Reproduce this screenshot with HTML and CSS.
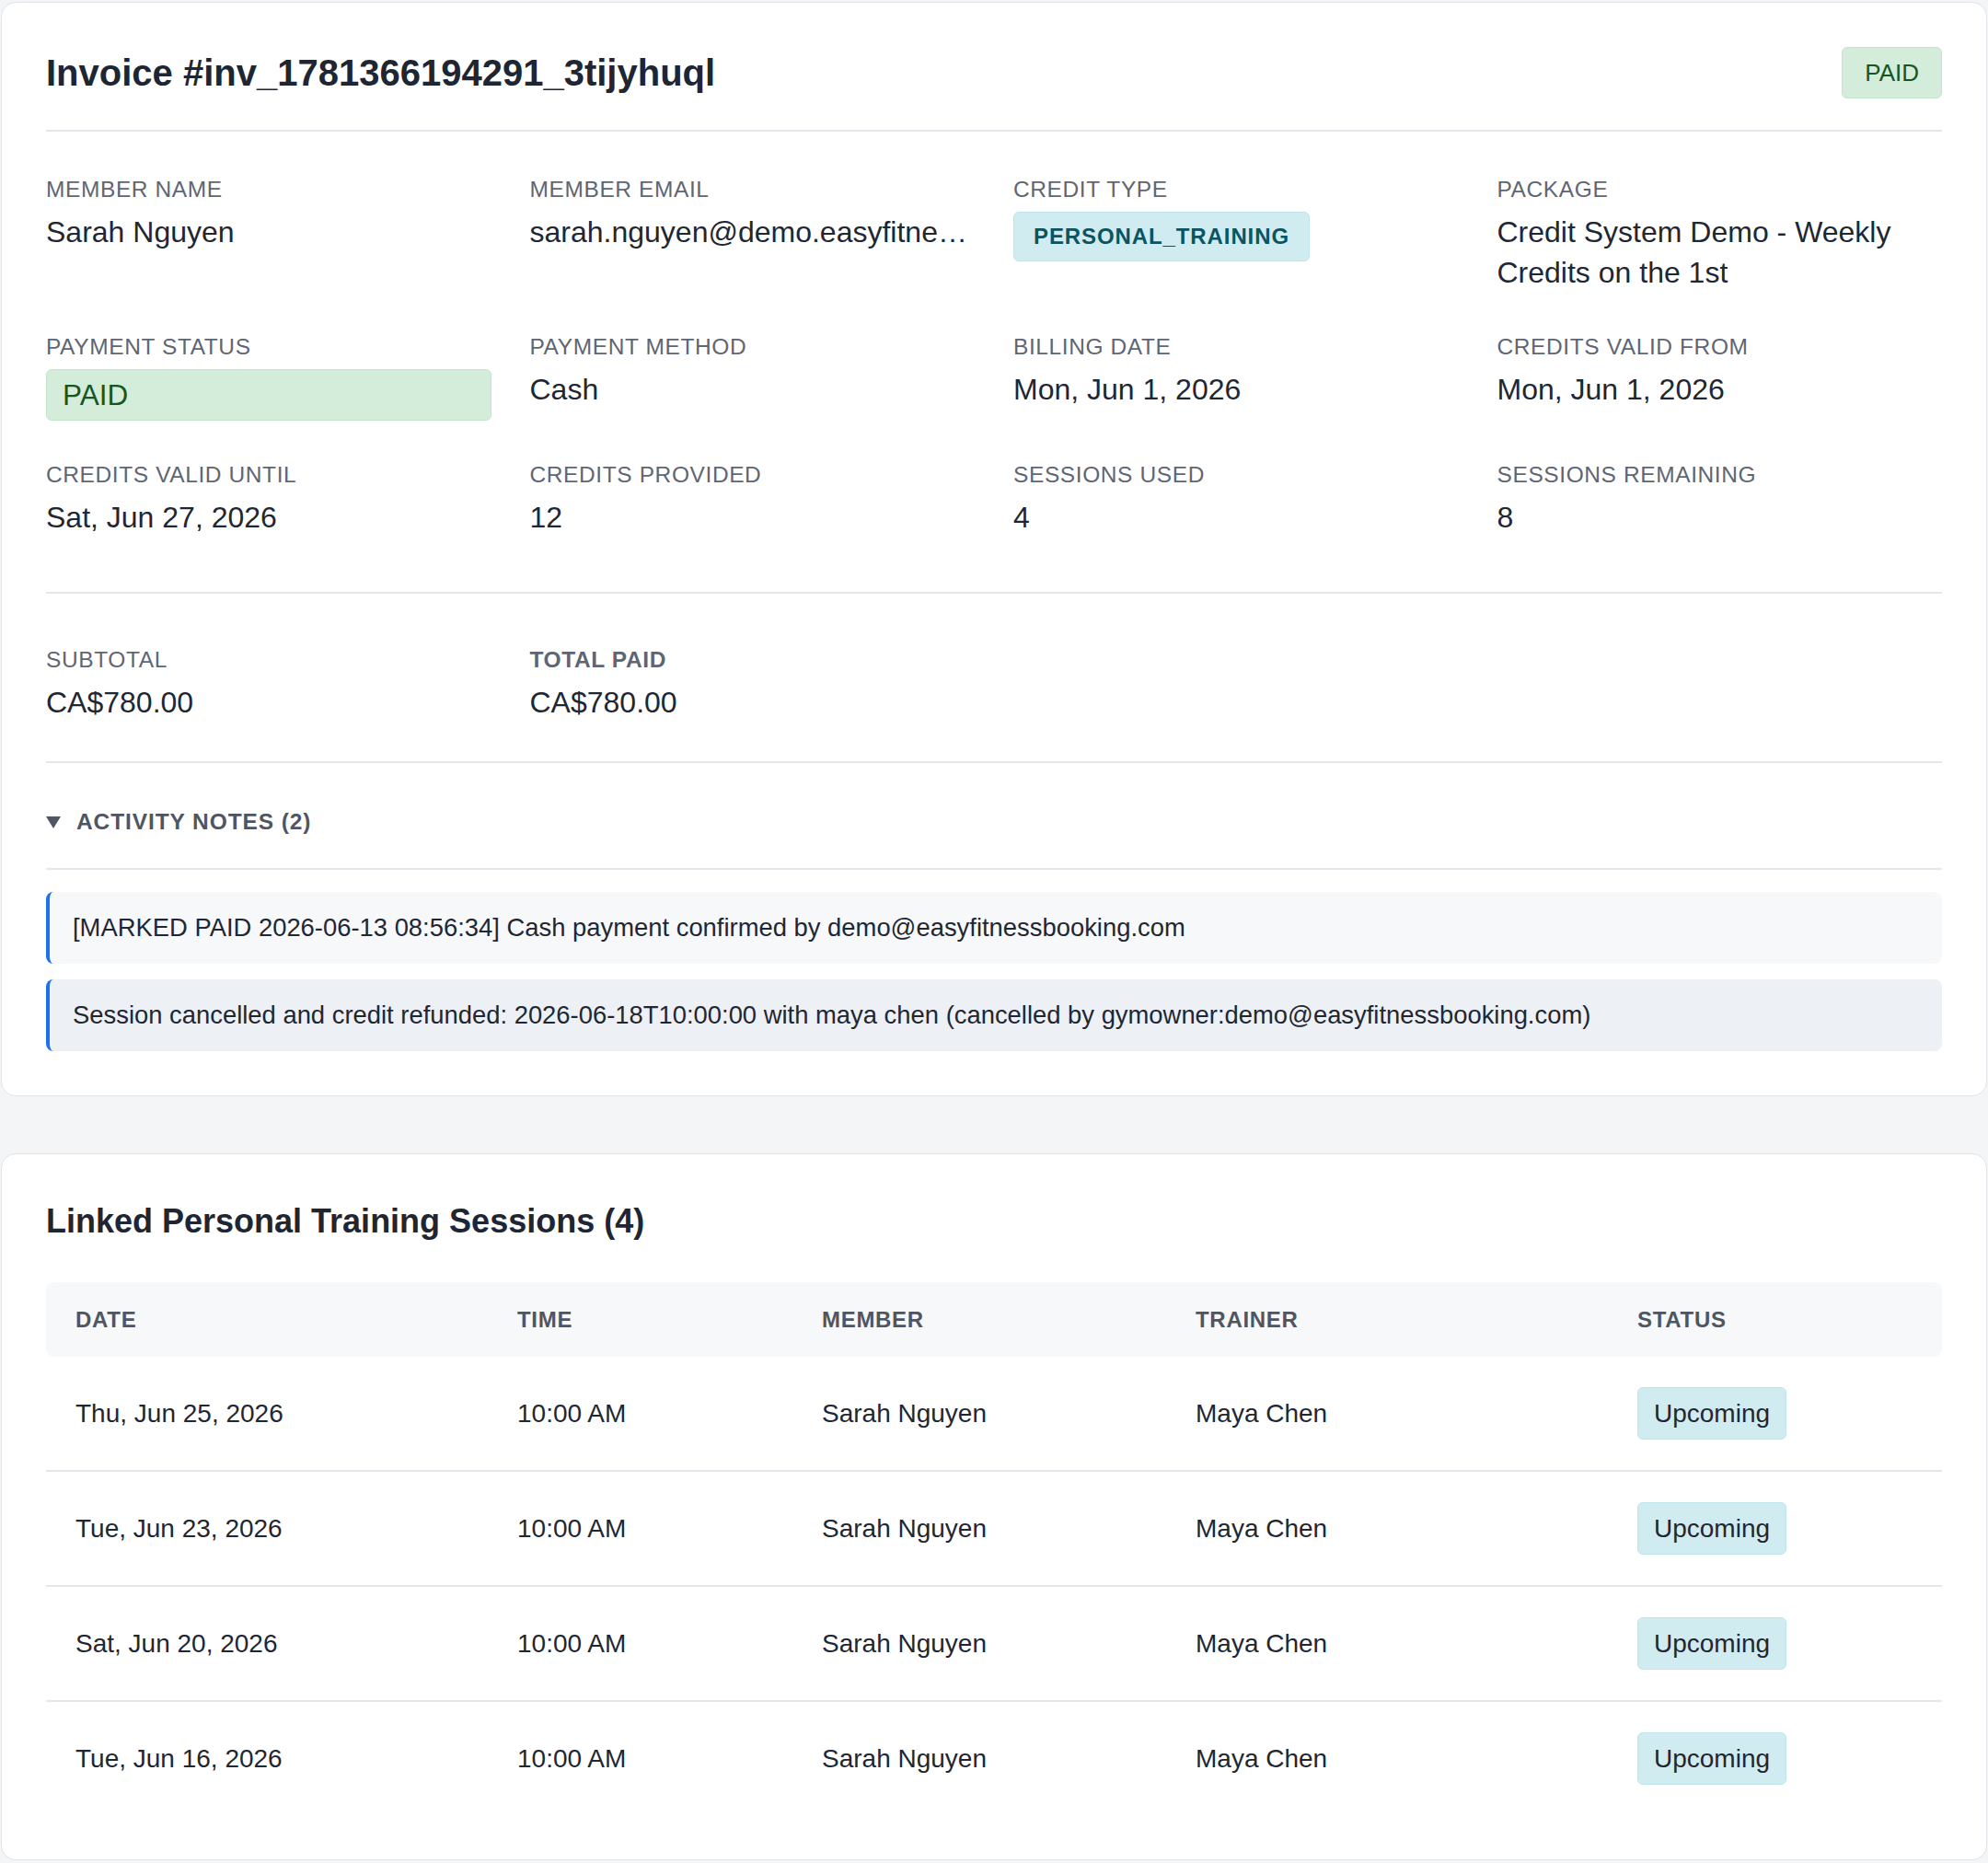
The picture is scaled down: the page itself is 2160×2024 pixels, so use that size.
FILE: index.html
```html
<!DOCTYPE html>
<html lang="en">
<head>
  <meta charset="UTF-8">
  <meta name="viewport" content="width=device-width, initial-scale=1.0">
  <title>Invoice #inv_1781366194291_3tijyhuql</title>
  <link rel="stylesheet" href="styles.css">
</head>
<body>

  <div class="page">

    <!-- Invoice card -->
    <div class="card">
      <div class="invoice-header">
        <h1>Invoice #inv_1781366194291_3tijyhuql</h1>
        <span class="badge badge-paid">PAID</span>
      </div>

      <div class="details">
        <div class="field">
          <div class="label">Member Name</div>
          <div class="value">Sarah Nguyen</div>
        </div>
        <div class="field">
          <div class="label">Member Email</div>
          <div class="value ellipsis">sarah.nguyen@demo.easyfitnessbooking.com</div>
        </div>
        <div class="field">
          <div class="label">Credit Type</div>
          <span class="badge badge-type">PERSONAL_TRAINING</span>
        </div>
        <div class="field">
          <div class="label">Package</div>
          <div class="value">Credit System Demo - Weekly Credits on the 1st</div>
        </div>

        <div class="field">
          <div class="label">Payment Status</div>
          <div class="status-box">PAID</div>
        </div>
        <div class="field">
          <div class="label">Payment Method</div>
          <div class="value">Cash</div>
        </div>
        <div class="field">
          <div class="label">Billing Date</div>
          <div class="value">Mon, Jun 1, 2026</div>
        </div>
        <div class="field">
          <div class="label">Credits Valid From</div>
          <div class="value">Mon, Jun 1, 2026</div>
        </div>

        <div class="field">
          <div class="label">Credits Valid Until</div>
          <div class="value">Sat, Jun 27, 2026</div>
        </div>
        <div class="field">
          <div class="label">Credits Provided</div>
          <div class="value">12</div>
        </div>
        <div class="field">
          <div class="label">Sessions Used</div>
          <div class="value">4</div>
        </div>
        <div class="field">
          <div class="label">Sessions Remaining</div>
          <div class="value">8</div>
        </div>
      </div>

      <div class="totals">
        <div class="field">
          <div class="label">Subtotal</div>
          <div class="value">CA$780.00</div>
        </div>
        <div class="field">
          <div class="label strong">Total Paid</div>
          <div class="value">CA$780.00</div>
        </div>
      </div>

      <div class="notes-toggle">
        <span class="caret"></span>
        <span>Activity Notes (2)</span>
      </div>

      <div class="notes">
        <div class="note">[MARKED PAID 2026-06-13 08:56:34] Cash payment confirmed by demo@easyfitnessbooking.com</div>
        <div class="note note-alt">Session cancelled and credit refunded: 2026-06-18T10:00:00 with maya chen (cancelled by gymowner:demo@easyfitnessbooking.com)</div>
      </div>
    </div>

    <!-- Linked sessions -->
    <div class="card sessions">
      <h2>Linked Personal Training Sessions (4)</h2>
      <table>
        <colgroup>
          <col class="c-date">
          <col class="c-time">
          <col class="c-member">
          <col class="c-trainer">
          <col class="c-status">
        </colgroup>
        <thead>
          <tr>
            <th>Date</th>
            <th>Time</th>
            <th>Member</th>
            <th>Trainer</th>
            <th>Status</th>
          </tr>
        </thead>
        <tbody>
          <tr>
            <td>Thu, Jun 25, 2026</td>
            <td>10:00 AM</td>
            <td>Sarah Nguyen</td>
            <td>Maya Chen</td>
            <td><span class="badge badge-upcoming">Upcoming</span></td>
          </tr>
          <tr>
            <td>Tue, Jun 23, 2026</td>
            <td>10:00 AM</td>
            <td>Sarah Nguyen</td>
            <td>Maya Chen</td>
            <td><span class="badge badge-upcoming">Upcoming</span></td>
          </tr>
          <tr>
            <td>Sat, Jun 20, 2026</td>
            <td>10:00 AM</td>
            <td>Sarah Nguyen</td>
            <td>Maya Chen</td>
            <td><span class="badge badge-upcoming">Upcoming</span></td>
          </tr>
          <tr>
            <td>Tue, Jun 16, 2026</td>
            <td>10:00 AM</td>
            <td>Sarah Nguyen</td>
            <td>Maya Chen</td>
            <td><span class="badge badge-upcoming">Upcoming</span></td>
          </tr>
        </tbody>
      </table>
    </div>

  </div>

</body>
</html>
```

FILE: styles.css
```css
body {
  margin: 0;
  background-color: #f4f5f7;
  font-family: "Liberation Sans", Arial, sans-serif;
  font-size: 28px;
  color: #1f2733;
}
.page {
  padding: 2px 1px 2px 1px;
}
.card {
  background: white;
  border: 1px solid #e0e3e7;
  border-radius: 16px;
  padding: 48px;
}
.card + .card {
  margin-top: 62px;
}

/* Header */
.invoice-header {
  display: flex;
  justify-content: space-between;
  align-items: center;
  padding-bottom: 34px;
  border-bottom: 2px solid #e3e6ea;
}
h1 {
  margin: 0;
  font-size: 40px;
  line-height: 48px;
  font-weight: bold;
  color: #1e2633;
}
.badge {
  display: inline-block;
  border-radius: 6px;
  border: 1px solid transparent;
}
.badge-paid {
  background: #d4edda;
  border-color: #c3e6cb;
  color: #155724;
  font-size: 26px;
  line-height: 34px;
  padding: 10px 24px;
}
.badge-type {
  background: #d1ecf1;
  border-color: #bee5eb;
  color: #0c5460;
  font-size: 24px;
  font-weight: bold;
  letter-spacing: 0.9px;
  line-height: 34px;
  padding: 9px 21px;
}
.badge-upcoming {
  background: #d1ecf1;
  border-color: #bee5eb;
  color: #1f2733;
  line-height: 39px;
  padding: 8px 17px;
  vertical-align: top;
}

/* Detail grid */
.details,
.totals {
  display: grid;
  grid-template-columns: repeat(4, 1fr);
  column-gap: 42px;
  row-gap: 42px;
}
.details {
  padding: 46px 0 59px;
  border-bottom: 2px solid #e3e6ea;
}
.totals {
  padding: 55px 0 42px;
  border-bottom: 2px solid #e3e6ea;
}
.field {
  min-width: 0;
}
.label {
  font-size: 24.5px;
  line-height: 34px;
  color: #5f6673;
  text-transform: uppercase;
  letter-spacing: 0.6px;
  margin-bottom: 7px;
}
.label.strong {
  font-weight: bold;
}
.value {
  font-size: 32px;
  line-height: 44px;
}
.ellipsis {
  white-space: nowrap;
  overflow: hidden;
  text-overflow: ellipsis;
}
.status-box {
  background: #d4edda;
  border: 1px solid #c3e6cb;
  border-radius: 6px;
  color: #155724;
  font-size: 31.5px;
  line-height: 40px;
  padding: 7px 17px;
}

/* Activity notes */
.notes-toggle {
  display: flex;
  align-items: center;
  gap: 17px;
  padding: 47px 0 33px;
  border-bottom: 2px solid #e3e6ea;
  font-size: 24.5px;
  line-height: 34px;
  font-weight: bold;
  color: #4f5663;
  text-transform: uppercase;
  letter-spacing: 0.9px;
}
.caret {
  width: 0;
  height: 0;
  border-left: 8px solid transparent;
  border-right: 8px solid transparent;
  border-top: 13px solid #4f5663;
}
.notes {
  padding-top: 24px;
  display: flex;
  flex-direction: column;
  gap: 17px;
}
.note {
  background: #f7f8fa;
  border-left: 4px solid #1a73e8;
  border-radius: 8px;
  padding: 22px 25px;
  font-size: 27.4px;
  line-height: 34px;
}
.note-alt {
  background: #edf0f4;
}

/* Sessions table */
.sessions h2 {
  margin: 0 0 42px;
  font-size: 36px;
  line-height: 49px;
  font-weight: bold;
  color: #1e2633;
}
table {
  width: 100%;
  table-layout: fixed;
  border-collapse: separate;
  border-spacing: 0;
}
.c-date { width: 480px; }
.c-time { width: 331px; }
.c-member { width: 406px; }
.c-trainer { width: 480px; }
.c-status { width: 363px; }
th {
  background: #f7f8fa;
  text-align: left;
  font-size: 24px;
  line-height: 34px;
  font-weight: bold;
  color: #4f5663;
  text-transform: uppercase;
  letter-spacing: 0.7px;
  padding: 23.5px 32px;
}
th:first-child {
  border-radius: 8px 0 0 8px;
}
th:last-child {
  border-radius: 0 8px 8px 0;
}
td {
  padding: 33px 32px;
  font-size: 28px;
  line-height: 39px;
  border-bottom: 2px solid #e3e6ea;
  vertical-align: middle;
}
tbody tr:last-child td {
  border-bottom: none;
}
```
